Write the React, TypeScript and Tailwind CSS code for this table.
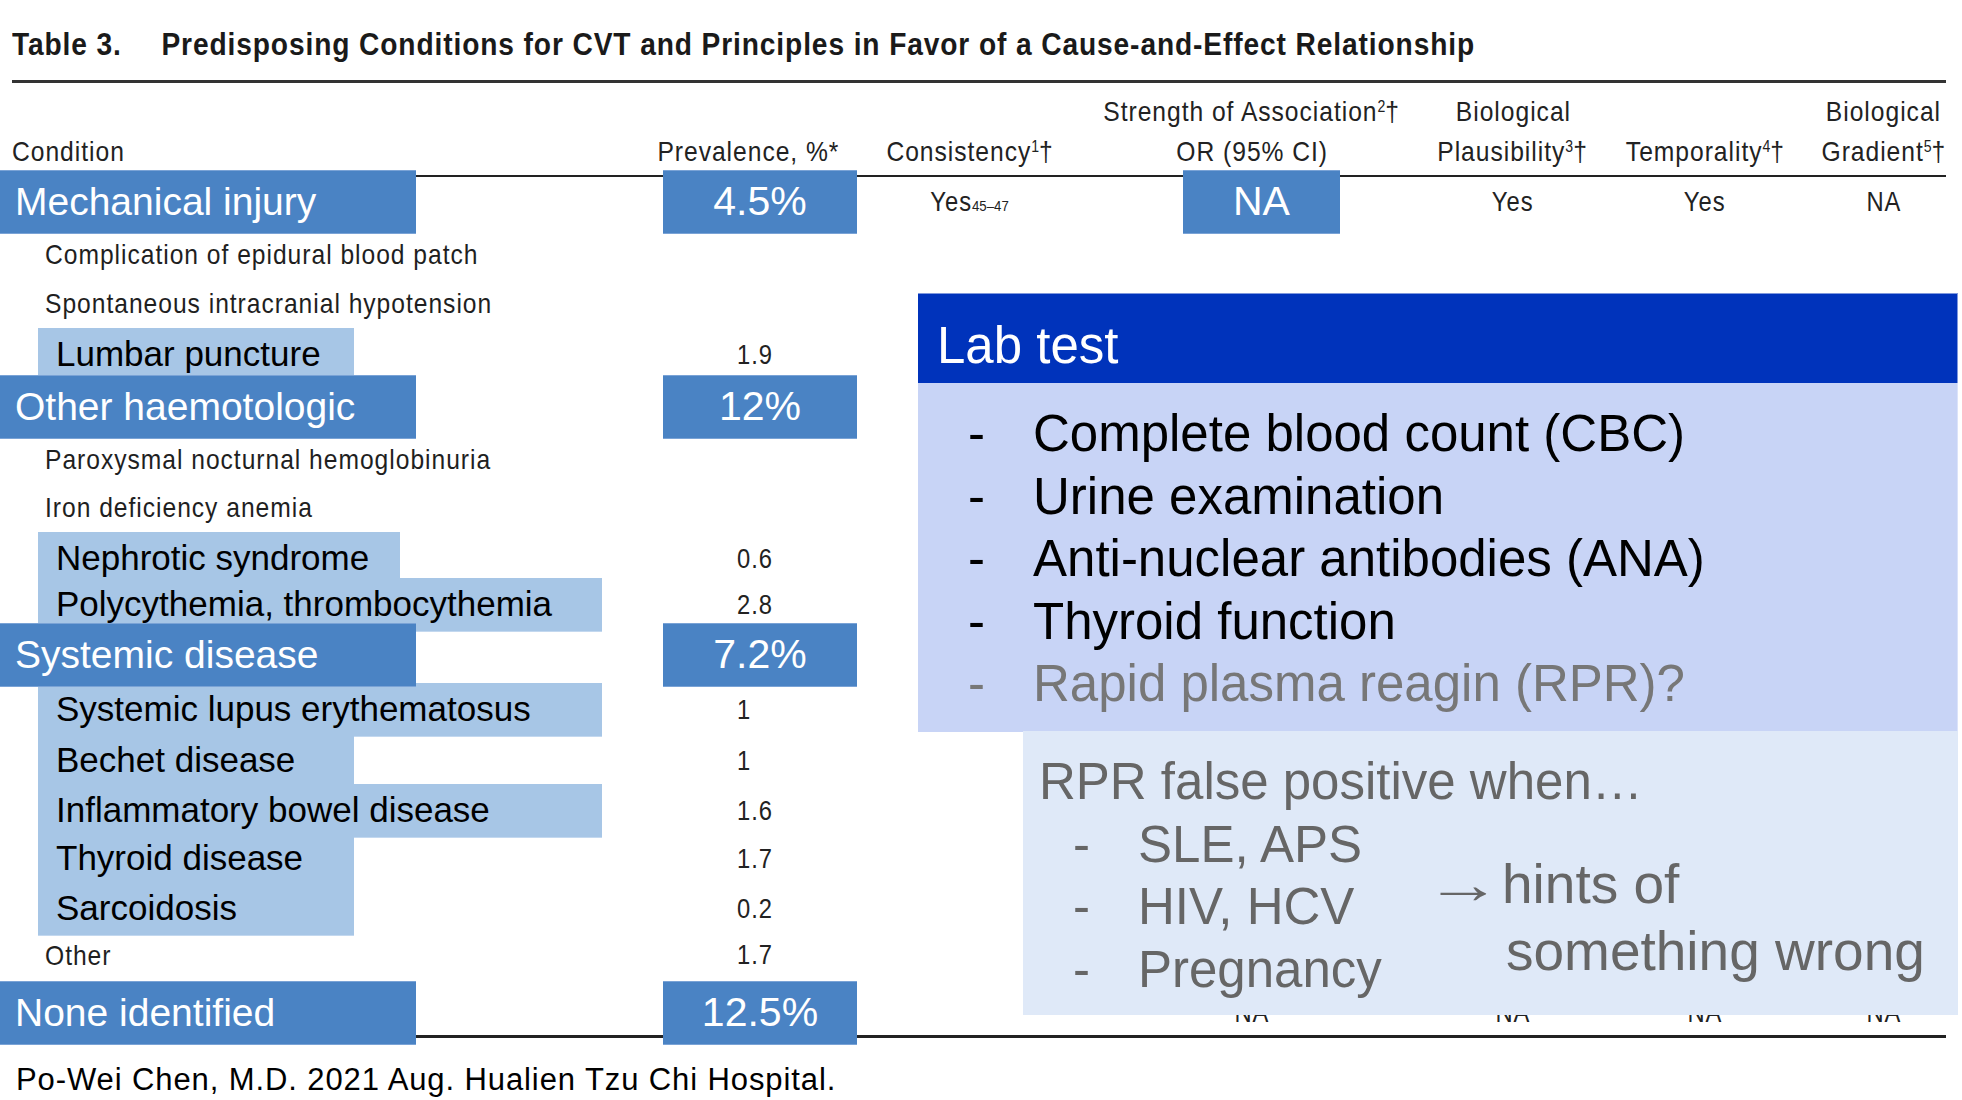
import React from "react";

// slide: JAMA table 3 with highlight overlays + lab test callout

const sans = "font-['Liberation_Sans',Arial,sans-serif]";
const cols = "grid grid-cols-[663px_194px_226px_338px_184px_200px_157px]";

type Row = {
  type: "major" | "sub" | "plain";
  label: string;
  pct?: string;
  value?: string;
  h: string;
  w?: string;
};

const rows: Row[] = [
  { type: "major", label: "Mechanical injury", pct: "4.5%", h: "h-[60px]" },
  { type: "plain", label: "Complication of epidural blood patch", h: "h-[49px]" },
  { type: "plain", label: "Spontaneous intracranial hypotension", h: "h-[49px]" },
  { type: "sub", label: "Lumbar puncture", value: "1.9", h: "h-[47px]", w: "w-[316px]" },
  { type: "major", label: "Other haemotologic", pct: "12%", h: "h-[60px]" },
  { type: "plain", label: "Paroxysmal nocturnal hemoglobinuria", h: "h-[49px]" },
  { type: "plain", label: "Iron deficiency anemia", h: "h-[48px]" },
  { type: "sub", label: "Nephrotic syndrome", value: "0.6", h: "h-[46px]", w: "w-[362px]" },
  { type: "sub", label: "Polycythemia, thrombocythemia", value: "2.8", h: "h-[45px]", w: "w-[564px]" },
  { type: "major", label: "Systemic disease", pct: "7.2%", h: "h-[60px]" },
  { type: "sub", label: "Systemic lupus erythematosus", value: "1", h: "h-[51px]", w: "w-[564px]" },
  { type: "sub", label: "Bechet disease", value: "1", h: "h-[50px]", w: "w-[316px]" },
  { type: "sub", label: "Inflammatory bowel disease", value: "1.6", h: "h-[48px]", w: "w-[564px]" },
  { type: "sub", label: "Thyroid disease", value: "1.7", h: "h-[50px]", w: "w-[316px]" },
  { type: "sub", label: "Sarcoidosis", value: "0.2", h: "h-[48px]", w: "w-[316px]" },
  { type: "plain", label: "Other", value: "1.7", h: "h-[51px]" },
  { type: "major", label: "None identified", pct: "12.5%", h: "h-[60px]" },
];

const labTests = [
  { text: "Complete blood count (CBC)", muted: false },
  { text: "Urine examination", muted: false },
  { text: "Anti-nuclear antibodies (ANA)", muted: false },
  { text: "Thyroid function", muted: false },
  { text: "Rapid plasma reagin (RPR)?", muted: true },
];

// the journal table is set in a condensed face; squeeze Liberation Sans to match
function Narrow({ children, left = false }: { children?: React.ReactNode; left?: boolean }) {
  return (
    <span className={`inline-block whitespace-nowrap tracking-[1.1px] scale-x-[0.88] ${left ? "origin-left" : ""}`}>
      {children}
    </span>
  );
}

function Cell({ children }: { children?: React.ReactNode }) {
  return (
    <div className="flex items-center justify-center text-[27px] text-[#222]">
      <Narrow>{children}</Narrow>
    </div>
  );
}

function HeadCell({ top, bottom }: { top?: React.ReactNode; bottom: React.ReactNode }) {
  return (
    <div className="flex flex-col items-center justify-end">
      {top && (
        <div className="h-[40px]">
          <Narrow>{top}</Narrow>
        </div>
      )}
      <div className="h-[40px]">
        <Narrow>{bottom}</Narrow>
      </div>
    </div>
  );
}

function Sup({ children }: { children: React.ReactNode }) {
  return <span className="relative -top-[9px] text-[16px] tracking-normal">{children}</span>;
}

function TableRow({ row, extra, className = "" }: { row: Row; extra?: React.ReactNode; className?: string }) {
  if (row.type === "major") {
    return (
      <div className={`${cols} ${row.h} ${className}`}>
        <div>
          <div className="relative flex h-full w-[416px] items-center border-y border-[#7aa3d6] bg-[#4a83c4] pl-[15px] text-[39px] text-white">
            {row.label}
          </div>
        </div>
        <div className="relative flex items-center justify-center border-y border-[#7aa3d6] bg-[#4a83c4] text-[41px] text-white">
          {row.pct}
        </div>
        {extra}
      </div>
    );
  }
  if (row.type === "sub") {
    return (
      <div className={`${cols} ${row.h}`}>
        <div className="pl-[38px]">
          <div className={`flex h-full ${row.w} items-center border-b border-[#c3d8ef] bg-[#a7c6e6] pl-[18px] text-[35px] text-black`}>
            {row.label}
          </div>
        </div>
        <div className="flex items-center pl-[74px] text-[27px] text-[#222]">
          <Narrow left>{row.value}</Narrow>
        </div>
      </div>
    );
  }
  return (
    <div className={`${cols} ${row.h}`}>
      <div className="flex items-center pl-[45px] text-[28px] text-[#1f1f1f]">
        <Narrow left>{row.label}</Narrow>
      </div>
      <div className="flex items-center pl-[74px] text-[27px] text-[#222]">
        <Narrow left>{row.value}</Narrow>
      </div>
    </div>
  );
}

export default function App() {
  const firstExtra = (
    <>
      <Cell>
        Yes<span className="text-[15px] tracking-normal">45–47</span>
      </Cell>
      <div className="flex items-stretch pl-[100px]">
        <div className="relative flex w-[157px] items-center justify-center border-y border-[#7aa3d6] bg-[#4a83c4] text-[41px] text-white">
          NA
        </div>
      </div>
      <Cell>Yes</Cell>
      <Cell>Yes</Cell>
      <Cell>NA</Cell>
    </>
  );

  const lastExtra = (
    <>
      <Cell />
      <Cell>NA</Cell>
      <Cell>NA</Cell>
      <Cell>NA</Cell>
      <Cell>NA</Cell>
    </>
  );

  return (
    <div className={`relative h-[1100px] w-[1962px] overflow-hidden bg-white ${sans}`}>
      {/* title */}
      <div className="h-[64px] pl-3 pt-[24px] text-[32px] font-bold leading-[40px] text-[#1a1a1a]">
        <Narrow left>
          <span className="tracking-[1px]">Table 3.</span>
          <span className="ml-[45px] tracking-[1px]">
            Predisposing Conditions for CVT and Principles in Favor of a Cause-and-Effect Relationship
          </span>
        </Narrow>
      </div>
      <div className="ml-3 mr-4 mt-4 h-[3px] bg-[#333]" />

      {/* header */}
      <div className={`${cols} mt-[9px] h-[80px] text-[28px] leading-[40px] text-[#222]`}>
        <div className="flex items-end pl-3">
          <div className="h-[40px]">
            <Narrow left>Condition</Narrow>
          </div>
        </div>
        <div className="flex items-end justify-center pr-[24px]">
          <div className="h-[40px]">
            <Narrow>Prevalence, %*</Narrow>
          </div>
        </div>
        <HeadCell
          bottom={
            <>
              Consistency<Sup>1</Sup>†
            </>
          }
        />
        <HeadCell
          top={
            <>
              Strength of Association<Sup>2</Sup>†
            </>
          }
          bottom="OR (95% CI)"
        />
        <HeadCell
          top="Biological"
          bottom={
            <>
              Plausibility<Sup>3</Sup>†
            </>
          }
        />
        <HeadCell
          bottom={
            <>
              Temporality<Sup>4</Sup>†
            </>
          }
        />
        <HeadCell
          top="Biological"
          bottom={
            <>
              Gradient<Sup>5</Sup>†
            </>
          }
        />
      </div>
      <div className="ml-3 mr-4 mt-[3px] h-[2px] bg-[#222]" />

      {/* body */}
      <div>
        {rows.map((row, i) => (
          <TableRow
            key={row.label}
            row={row}
            className={i === 0 ? "-mt-[7px]" : ""}
            extra={i === 0 ? firstExtra : i === rows.length - 1 ? lastExtra : undefined}
          />
        ))}
      </div>
      <div className="-mt-[6px] ml-3 mr-4 h-[3px] bg-[#222]" />

      <div className="mt-[22px] pl-[16px] text-[31px] leading-[40px] tracking-[0.9px] text-black">
        Po-Wei Chen, M.D. 2021 Aug. Hualien Tzu Chi Hospital.
      </div>

      {/* lab test callout */}
      <div className="absolute left-[918px] top-[293px] z-10 w-[1040px]">
        <div className="h-[90px] border-r border-t border-[#7f98dd] bg-[#0033bb] pl-[19px] pt-[22px] text-[51px] leading-[60px] text-white">
          Lab test
        </div>
        <div className="h-[349px] border-r border-[#dbe3fa] bg-[#c8d4f6] pl-[50px] pt-[20px] text-[51px] leading-[62.5px]">
          {labTests.map((t) => (
            <div key={t.text} className={`flex ${t.muted ? "text-[#777]" : "text-black"}`}>
              <span className="w-[65px] shrink-0">-</span>
              <span>{t.text}</span>
            </div>
          ))}
        </div>
      </div>

      <div className="absolute left-[1023px] top-[731px] z-10 h-[284px] w-[935px] bg-[#dfe9f8] pl-[16px] pt-[20px] text-[51px] leading-[62.5px] text-[#666]">
        <div>RPR false positive when…</div>
        <div className="flex">
          <div className="w-[386px] shrink-0 pl-[34px]">
            {["SLE, APS", "HIV, HCV", "Pregnancy"].map((t) => (
              <div key={t} className="flex">
                <span className="w-[65px] shrink-0">-</span>
                <span>{t}</span>
              </div>
            ))}
          </div>
          <div className="mt-[37px] text-[55px] leading-[67px]">
            <div className="flex items-baseline">
              <span className="inline-block origin-left scale-x-[1.4]">→</span>
              <span className="ml-[22px]">hints of</span>
            </div>
            <div className="pl-[81px]">something wrong</div>
          </div>
        </div>
      </div>
    </div>
  );
}
